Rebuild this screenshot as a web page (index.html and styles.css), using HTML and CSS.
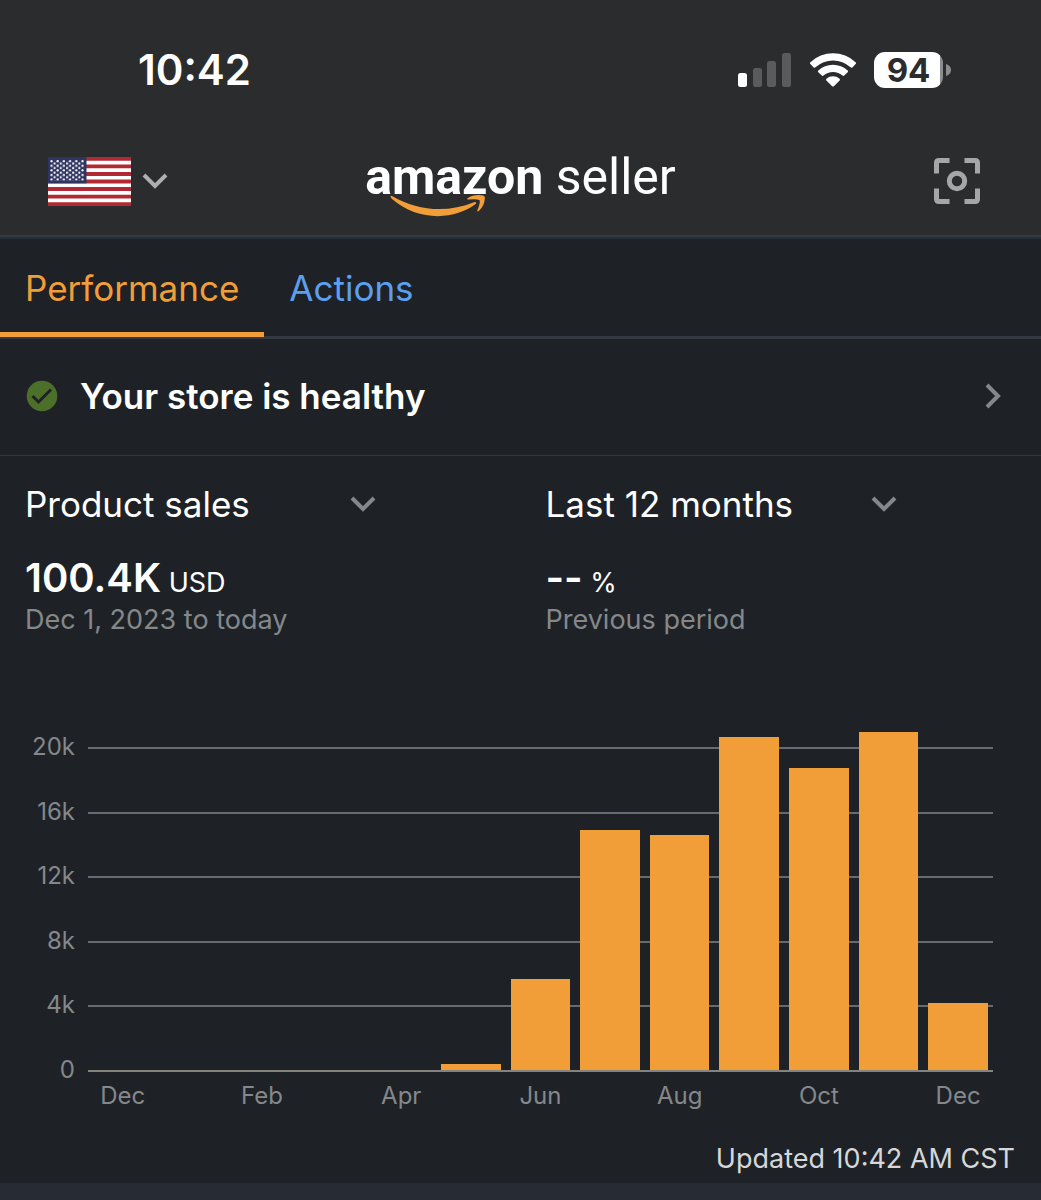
FILE: index.html
```html
<!DOCTYPE html>
<html lang="en">
<head>
  <meta charset="UTF-8">
  <meta name="viewport" content="width=device-width, initial-scale=1">
  <title>Amazon Seller</title>
  <link rel="stylesheet" href="styles.css">
</head>
<body>
  <header class="header">
    <div class="status-bar">
      <span class="time">10:42</span>
      <div class="status-icons">
        <svg class="signal" width="54" height="34" viewBox="0 0 54 34" aria-hidden="true">
          <rect x="0" y="20" width="9" height="14" rx="2.5" fill="#fff"/>
          <rect x="15" y="15" width="9" height="19" rx="2.5" fill="#5a5b5d"/>
          <rect x="29" y="8" width="9" height="26" rx="2.5" fill="#5a5b5d"/>
          <rect x="44" y="0" width="9" height="34" rx="2.5" fill="#5a5b5d"/>
        </svg>
        <svg class="wifi" width="48" height="34" viewBox="0 0 48 34" aria-hidden="true">
          <path d="M1.4 9.2 A33 33 0 0 1 46.6 9.2 Q47.5 10.2 46.6 11.1 L43.4 14.4 Q42.5 15.2 41.5 14.3 A26 26 0 0 0 6.5 14.3 Q5.5 15.2 4.6 14.4 L1.4 11.1 Q.5 10.2 1.4 9.2Z" fill="#fff"/>
          <path d="M9.3 17.5 A21.5 21.5 0 0 1 38.7 17.5 Q39.6 18.4 38.7 19.3 L35.3 22.6 Q34.4 23.4 33.5 22.6 A14 14 0 0 0 14.5 22.6 Q13.6 23.4 12.7 22.6 L9.3 19.3 Q8.4 18.4 9.3 17.5Z" fill="#fff"/>
          <path d="M17.4 25.7 A10 10 0 0 1 30.6 25.7 Q31.5 26.6 30.6 27.5 L24.9 33.2 Q24 34 23.1 33.2 L17.4 27.5 Q16.5 26.6 17.4 25.7Z" fill="#fff"/>
        </svg>
        <div class="battery">
          <span class="battery-level">94</span>
          <svg width="5" height="12" viewBox="0 0 5 12" aria-hidden="true"><path d="M0 0 Q5 1.5 5 6 Q5 10.5 0 12Z" fill="#8b8c8e"/></svg>
        </div>
      </div>
    </div>
    <div class="nav-bar">
      <button type="button" class="country" aria-label="Marketplace: United States">
        <svg width="83" height="49" viewBox="0 0 83 49" aria-hidden="true">
          <defs>
            <pattern id="stars" x="2" y="3" width="6.2" height="4.6" patternUnits="userSpaceOnUse">
              <circle cx="1.5" cy="1.1" r="1.1" fill="#fff"/>
              <circle cx="4.6" cy="3.4" r="1.1" fill="#fff"/>
            </pattern>
          </defs>
          <rect width="83" height="49" fill="#fff"/>
          <path d="M0 1.9H83M0 9.4H83M0 17H83M0 24.5H83M0 32H83M0 39.6H83M0 47.1H83" stroke="#b12a33" stroke-width="3.8"/>
          <rect width="38.5" height="26.3" fill="#2f3460"/>
          <rect x="2" y="3" width="34" height="20.7" fill="url(#stars)"/>
        </svg>
        <svg class="chevron" width="26" height="16" viewBox="0 0 26 16" aria-hidden="true"><path d="M2 2 L13 13 L24 2"/></svg>
      </button>
      <div class="logo">
        <span class="logo-name">amazon</span>
        <span class="logo-product">seller</span>
        <svg class="smile" width="96" height="22" viewBox="0 0 96 22" aria-hidden="true">
          <path d="M.6 1.5 Q.8 .2 2.5 1.2 C27 16 58 18 84 7.2 Q86.5 6.6 86.2 8.6 C64 26 27 26 2 4 Q.4 2.5 .6 1.5Z" fill="#f19e39"/>
          <path d="M77.5 3.2 Q84 -1 93 .4 Q95 .8 94.9 3 Q94.5 11 88.8 16 Q87 17.2 87.3 15.3 Q90.5 8 89.6 5.3 Q87 3.7 78.5 4.6 Q76.5 4.5 77.5 3.2Z" fill="#f19e39"/>
        </svg>
      </div>
      <button type="button" class="scan" aria-label="Scan">
        <svg width="46" height="46" viewBox="0 0 46 46" fill="none" stroke="#a5a6a8" stroke-width="5" aria-hidden="true">
          <path d="M2.5 15.5V5Q2.5 2.5 5 2.5H15.5M30.5 2.5H41Q43.5 2.5 43.5 5V15.5M43.5 30.5V41Q43.5 43.5 41 43.5H30.5M15.5 43.5H5Q2.5 43.5 2.5 41V30.5"/>
          <circle cx="23" cy="23" r="7.7"/>
        </svg>
      </button>
    </div>
  </header>

  <nav class="tabs">
    <a href="#performance" class="tab active">Performance</a>
    <a href="#actions" class="tab">Actions</a>
  </nav>

  <main id="performance">
    <a href="#health" class="health">
      <svg width="32" height="32" viewBox="0 0 32 32" aria-hidden="true">
        <circle cx="16" cy="16" r="15.3" fill="#4c7029"/>
        <path d="M6.5 16 L12.5 22 L25 9.5" fill="none" stroke="#1e2226" stroke-width="3"/>
      </svg>
      <span class="health-text">Your store is healthy</span>
      <svg class="chevron" width="16" height="26" viewBox="0 0 16 26" aria-hidden="true"><path d="M2 2 L13 13 L2 24"/></svg>
    </a>

    <section class="metrics">
      <div class="metric">
        <div class="dropdown">
          <select aria-label="Metric">
            <option>Product sales</option>
            <option>Units sold</option>
          </select>
          <svg class="chevron" width="26" height="16" viewBox="0 0 26 16" aria-hidden="true"><path d="M2 2 L13 13 L24 2"/></svg>
        </div>
        <div class="value"><strong>100.4K</strong> USD</div>
        <div class="note">Dec 1, 2023 to today</div>
      </div>
      <div class="metric">
        <div class="dropdown">
          <select aria-label="Period">
            <option>Last 12 months</option>
            <option>Last 30 days</option>
          </select>
          <svg class="chevron" width="26" height="16" viewBox="0 0 26 16" aria-hidden="true"><path d="M2 2 L13 13 L24 2"/></svg>
        </div>
        <div class="value"><strong>--</strong> %</div>
        <div class="note">Previous period</div>
      </div>
    </section>

    <section class="chart">
      <div class="ticks">
        <div class="tick"><span>20k</span></div>
        <div class="tick"><span>16k</span></div>
        <div class="tick"><span>12k</span></div>
        <div class="tick"><span>8k</span></div>
        <div class="tick"><span>4k</span></div>
        <div class="tick"><span>0</span></div>
      </div>
      <!-- bar height = sales / 20k -->
      <div class="bars">
        <div class="bar" style="height: 0%"></div>
        <div class="bar" style="height: 0%"></div>
        <div class="bar" style="height: 0%"></div>
        <div class="bar" style="height: 0%"></div>
        <div class="bar" style="height: 0%"></div>
        <div class="bar" style="height: 2%"></div>
        <div class="bar" style="height: 28.3%"></div>
        <div class="bar" style="height: 74.6%"></div>
        <div class="bar" style="height: 72.9%"></div>
        <div class="bar" style="height: 103.4%"></div>
        <div class="bar" style="height: 93.8%"></div>
        <div class="bar" style="height: 105%"></div>
        <div class="bar" style="height: 20.7%"></div>
      </div>
      <div class="months">
        <span>Dec</span><span></span><span>Feb</span><span></span><span>Apr</span><span></span><span>Jun</span><span></span><span>Aug</span><span></span><span>Oct</span><span></span><span>Dec</span>
      </div>
    </section>

    <p class="updated">Updated 10:42 AM CST</p>
  </main>
</body>
</html>
```

FILE: styles.css
```css
* { box-sizing: border-box; }
body {
  margin: 0;
  min-height: 100vh;
  display: flex;
  flex-direction: column;
  font-family: Inter, 'Liberation Sans', sans-serif;
  background-color: #272b34;
  color: #fff;
}
a {
  text-decoration: none;
}
button {
  padding: 0;
  border: none;
  background: none;
  cursor: pointer;
}
svg {
  display: block;
}
.chevron {
  fill: none;
  stroke: #85888b;
  stroke-width: 4;
}

/* header */
.header {
  background-color: #2b2c2e;
  border-bottom: 2px solid #343a42;
}
.status-bar {
  display: flex;
  justify-content: space-between;
  align-items: center;
  height: 139px;
  padding: 0 90px 0 138px;
}
.time {
  font-size: 42px;
  font-weight: 600;
}
.status-icons {
  display: flex;
  align-items: center;
  gap: 17px;
}
.battery {
  display: flex;
  align-items: center;
  gap: 3px;
}
.battery-level {
  width: 69px;
  height: 36px;
  border-radius: 11px;
  background: linear-gradient(to right, #fff 95%, #8b8c8e 95%);
  color: #2b2c2e;
  font-size: 33px;
  font-weight: 700;
  line-height: 36px;
  text-align: center;
}
.nav-bar {
  display: grid;
  grid-template-columns: 1fr auto 1fr;
  align-items: center;
  height: 96px;
  padding: 0 48px 12px;
}
.country {
  display: flex;
  align-items: center;
  gap: 11px;
}
.country .chevron {
  stroke: #aeafb1;
}
.scan {
  justify-self: end;
  margin-right: 13px;
}
.logo {
  position: relative;
  padding-bottom: 8px;
  font-family: Roboto, sans-serif;
  font-size: 50px;
  line-height: 64px;
}
.logo-name {
  font-weight: 700;
}
.smile {
  position: absolute;
  left: 25px;
  bottom: 0;
}

/* tabs */
.tabs {
  display: flex;
  height: 102px;
  background-color: #1e2226;
  border-top: 2px solid #252d35;
  border-bottom: 3px solid #343840;
}
.tab {
  display: flex;
  align-items: center;
  margin-bottom: -1px;
  padding: 4px 25px 0;
  border-bottom: 5px solid transparent;
  color: #5c9fee;
  font-size: 35px;
}
.tab.active {
  border-color: #f19e39;
  color: #f19e39;
}

main {
  background-color: #1e2226;
}
.health {
  display: flex;
  align-items: center;
  gap: 22px;
  height: 117px;
  padding: 0 40px 2px 26px;
  border-bottom: 1px solid #33383c;
  color: #fff;
}
.health-text {
  flex: 1;
  font-size: 35px;
  font-weight: 600;
}

/* metrics */
.metrics {
  display: grid;
  grid-template-columns: 1fr 1fr;
  padding-top: 24px;
}
.metric {
  padding-left: 25px;
}
.dropdown {
  display: grid;
  align-items: center;
  max-width: 351px;
}
.dropdown select,
.dropdown .chevron {
  grid-area: 1 / 1;
}
.dropdown .chevron {
  justify-self: end;
  pointer-events: none;
}
.dropdown select {
  appearance: none;
  width: 100%;
  height: 48px;
  padding: 0;
  border: none;
  background: none;
  color: #fff;
  font-family: inherit;
  font-size: 35px;
}
.dropdown option {
  background-color: #1e2226;
}
.value {
  margin-top: 28px;
  font-size: 27px;
  line-height: 44px;
}
.value strong {
  font-size: 40px;
  font-weight: 600;
}
.note {
  color: #85888b;
  font-size: 27px;
  line-height: 30px;
}

/* chart */
.chart {
  display: grid;
  padding-top: 98px;
}
.ticks,
.bars {
  grid-area: 1 / 1;
}
.ticks {
  display: flex;
  flex-direction: column;
  justify-content: space-between;
  height: 353px;
  padding-right: 48px;
}
.tick {
  display: flex;
  align-items: center;
  gap: 13px;
  height: 30px;
  color: #85888b;
  font-size: 24px;
}
.tick span {
  width: 75px;
  padding-bottom: 3px;
  text-align: right;
}
.tick::after {
  content: '';
  flex: 1;
  height: 2px;
  background-color: #676b6f;
}
.bars {
  display: flex;
  align-items: flex-end;
  margin: 15px 48px 14px 88px;
  border-bottom: 2px solid #85837e;
}
.bar {
  flex: 1;
  margin: 0 5px;
  background-color: #f19e39;
}
.months {
  display: flex;
  margin: 0 48px 0 88px;
  color: #85888b;
  font-size: 24px;
  line-height: 20px;
}
.months span {
  flex: 1;
  text-align: center;
}
.updated {
  margin: 0;
  padding: 36px 26px 7px;
  color: #d5d7d9;
  font-size: 27px;
  line-height: 34px;
  text-align: right;
}
```
